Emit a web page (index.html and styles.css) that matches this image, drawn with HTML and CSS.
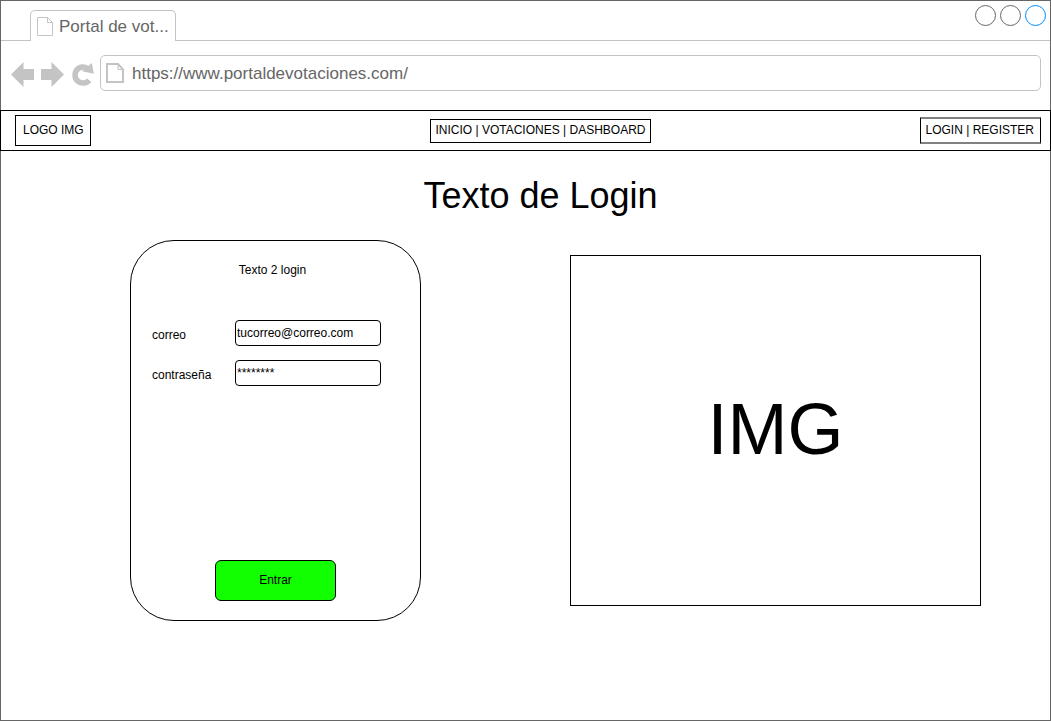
FILE: index.html
```html
<!DOCTYPE html>
<html lang="es">
<head>
<meta charset="utf-8">
<title>Portal de votaciones</title>
<link rel="stylesheet" href="styles.css">
</head>
<body>
<div class="window">
  <div class="tab-bar">
    <div class="tab">
      <svg class="tab-icon" width="16" height="19" viewBox="0 0 16 19" fill="none" stroke="#c4c4c4" aria-hidden="true"><path d="M.5.5h10l5 5v13H.5zM10.500.5v5h5"/></svg>
      <span class="tab-title">Portal de vot...</span>
    </div>
    <div class="window-controls">
      <button class="control" type="button" aria-label="Minimizar"></button>
      <button class="control" type="button" aria-label="Maximizar"></button>
      <button class="control control-close" type="button" aria-label="Cerrar"></button>
    </div>
  </div>

  <div class="toolbar">
    <button class="tool" type="button" aria-label="Atrás">
      <svg width="24" height="26" viewBox="0 0 24 26" fill="#c4c4c4"><path d="M0 13.500 12.500 1v7H23v11H12.500v7z"/></svg>
    </button>
    <button class="tool" type="button" aria-label="Adelante">
      <svg width="24" height="26" viewBox="0 0 24 26" fill="#c4c4c4"><path d="M23 13.500 10.500 1v7H0v11h10.500v7z"/></svg>
    </button>
    <button class="tool" type="button" aria-label="Recargar">
      <svg width="23" height="26" viewBox="0 0 23 26"><path d="M17.500 8.200A8 8 0 1 0 18.200 19.200" fill="none" stroke="#c4c4c4" stroke-width="5.600"/><path d="M20.800 2l2 10.700-11.800-2.400z" fill="#c4c4c4"/></svg>
    </button>
    <label class="address">
      <svg width="18" height="20" viewBox="0 0 18 20" fill="none" stroke="#c4c4c4" aria-hidden="true"><path d="M1 1h11l5 5.500V19H1z" stroke-width="2"/><path d="M12 1v5.500h5"/></svg>
      <input class="address-input" type="text" aria-label="Dirección" value="https://www.portaldevotaciones.com/">
    </label>
  </div>

  <header class="site-header">
    <div class="logo">LOGO IMG</div>
    <nav class="site-nav"><a href="#">INICIO</a> | <a href="#">VOTACIONES</a> | <a href="#">DASHBOARD</a></nav>
    <div class="account"><a href="#">LOGIN</a> | <a href="#">REGISTER</a></div>
  </header>

  <h1 class="title">Texto de Login</h1>

  <main class="content">
    <form class="card">
      <h2 class="card-title">Texto 2 login</h2>
      <div class="field">
        <label class="field-label" for="correo">correo</label>
        <input class="field-input" id="correo" type="text" value="tucorreo@correo.com">
      </div>
      <div class="field">
        <label class="field-label" for="clave">contraseña</label>
        <input class="field-input" id="clave" type="text" value="********">
      </div>
      <button class="submit" type="button">Entrar</button>
    </form>
    <div class="picture">IMG</div>
  </main>
</div>
</body>
</html>
```

FILE: styles.css
```css
* {
  box-sizing: border-box;
}

body {
  margin: 0;
  background: #fff;
  color: #000;
  font: 12px/14px "Liberation Sans", Arial, sans-serif;
}

button,
input {
  margin: 0;
  padding: 0;
  font: inherit;
  color: inherit;
}

a {
  color: inherit;
  text-decoration: none;
}

.window {
  min-height: 100vh;
  border: 1px solid #666;
}

.tab-bar {
  display: flex;
  justify-content: space-between;
  align-items: flex-end;
  height: 40px;
  padding: 0 4px 0 29px;
  border-bottom: 1px solid #c4c4c4;
}

.tab {
  display: flex;
  align-items: center;
  gap: 6px;
  width: 146px;
  height: 31px;
  margin-bottom: -1px;
  padding-left: 6px;
  border: 1px solid #c4c4c4;
  border-bottom: 0;
  border-radius: 5px 5px 0 0;
  background: #fff;
  color: #666;
  font-size: 17px;
  line-height: 20px;
}

.tab-title {
  padding-top: 2px;
}

.window-controls {
  display: flex;
  gap: 4px;
  align-self: flex-start;
  padding-top: 4px;
}

.control {
  width: 21px;
  height: 21px;
  border: 1px solid #666;
  border-radius: 50%;
  background: #fff;
}

.control-close {
  border-color: #008cff;
}

.toolbar {
  display: flex;
  align-items: center;
  gap: 6px;
  padding: 14px 9px 19px 10px;
}

.tool {
  display: flex;
  padding-top: 2px;
  border: 0;
  background: none;
}

.address {
  display: flex;
  flex: 1;
  align-items: center;
  gap: 8px;
  height: 36px;
  padding: 0 5px;
  border: 1px solid #c4c4c4;
  border-radius: 5px;
}

.address-input {
  flex: 1;
  padding-top: 2px;
  border: 0;
  outline: 0;
  background: none;
  color: #666;
  font-size: 17px;
  line-height: 20px;
}

.site-header {
  display: grid;
  grid-template-columns: 1fr auto 1fr;
  align-items: center;
  height: 41px;
  margin: 0 -1px;
  padding: 0 9px 0 14px;
  border: 1px solid #000;
}

.logo {
  justify-self: start;
  padding: 7px 6px 8px 7px;
  border: 1px solid #000;
}

.site-nav {
  margin-left: 25px;
  padding: 3px 4px 5px;
  border: 1px solid #000;
}

.account {
  justify-self: end;
  padding: 4px 6px 5px 5px;
  border: solid #808080;
  border-width: 2px 1px;
  border-left-color: #000;
  border-right-color: #000;
}

.title {
  margin: 24px 0;
  padding-left: 30px;
  font-size: 36px;
  font-weight: 400;
  line-height: 41px;
  text-align: center;
}

.content {
  display: grid;
  grid-template-columns: 291fr 411fr;
  gap: 149px;
  align-items: center;
  padding: 0 69px 24px 129px;
}

.card {
  display: flex;
  flex-direction: column;
  height: 381px;
  padding: 22px 39px 19px 21px;
  border: 1px solid #000;
  border-radius: 44px;
}

.card-title {
  margin: 0 0 43px;
  padding-left: 12px;
  font-size: 12px;
  font-weight: 400;
  text-align: center;
}

.field {
  display: flex;
  align-items: center;
  justify-content: space-between;
  margin-bottom: 14px;
}

.field-label {
  padding-top: 4px;
}

.field-input {
  width: 146px;
  height: 26px;
  padding: 0 1px;
  border: 1px solid #000;
  border-radius: 4px;
  background: #fff;
}

.submit {
  width: 121px;
  height: 41px;
  margin: auto auto 0 63px;
  padding-bottom: 2px;
  border: 1px solid #000;
  border-radius: 6px;
  background: #1f0;
}

.picture {
  display: flex;
  align-items: center;
  justify-content: center;
  height: 351px;
  padding-bottom: 4px;
  border: 1px solid #000;
  font-size: 72px;
  line-height: 82px;
}
```
